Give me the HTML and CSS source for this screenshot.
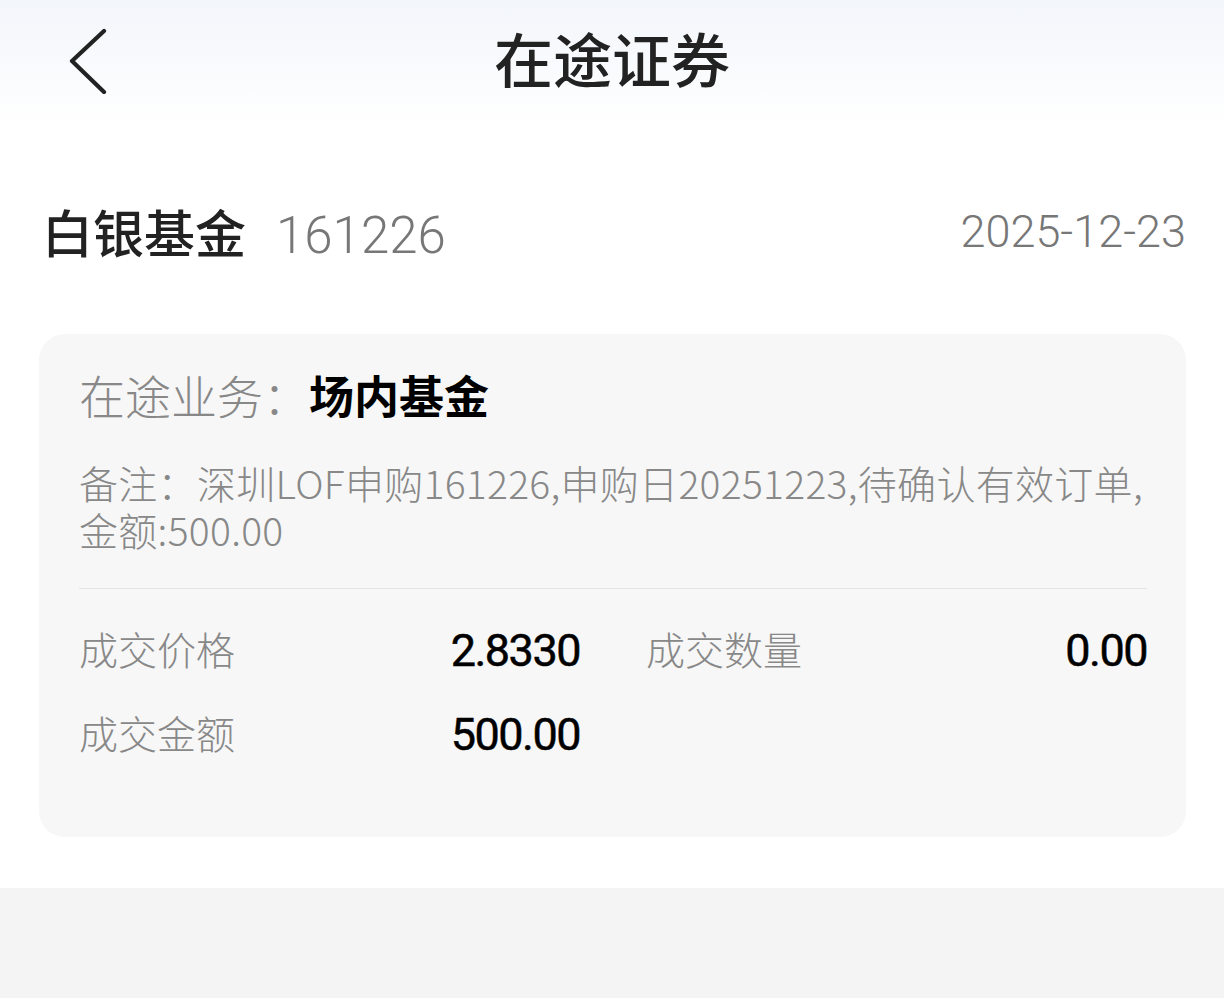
FILE: index.html
```html
<!DOCTYPE html>
<html lang="zh-CN">
<head>
<meta charset="utf-8">
<title>在途证券</title>
<link rel="stylesheet" href="styles.css">
</head>
<body>
<div class="page">
  <header class="header">
    <span class="back">
      <svg width="40" height="66" viewBox="0 0 40 66"><polyline points="36,3 4,33 36,64" fill="none" stroke="#222" stroke-width="4.2" stroke-linecap="round" stroke-linejoin="round"/></svg>
    </span>
    <h1 class="title">在途证券</h1>
  </header>
  <section class="stock">
    <div class="stock-left">
      <span class="stock-name">白银基金</span>
      <span class="stock-code">161226</span>
    </div>
    <span class="stock-date">2025-12-23</span>
  </section>
  <section class="card">
    <div class="biz"><span class="biz-label">在途业务：</span><span class="biz-value">场内基金</span></div>
    <div class="remark">
      <div class="remark-line">备注：深圳LOF申购161226,申购日20251223,待确认有效订单,</div>
      <div class="remark-line">金额:500.00</div>
    </div>
    <div class="divider"></div>
    <div class="grid">
      <div class="cell"><span class="label">成交价格</span><span class="value">2.8330</span></div>
      <div class="cell"><span class="label">成交数量</span><span class="value">0.00</span></div>
      <div class="cell"><span class="label">成交金额</span><span class="value">500.00</span></div>
    </div>
  </section>
  <div class="footer"></div>
</div>
</body>
</html>
```
FILE: styles.css
```css
html, body {
  margin: 0;
  padding: 0;
  height: 100%;
  background: #fff;
}
body {
  font-family: Roboto, "Noto Sans CJK SC", sans-serif;
}
.page {
  display: flex;
  flex-direction: column;
  min-height: 100%;
}
.header {
  position: relative;
  height: 124px;
  display: flex;
  align-items: center;
  justify-content: center;
  background: linear-gradient(180deg, #f3f6fb 0%, #f9fbfd 60%, #ffffff 100%);
}
.back {
  position: absolute;
  left: 68px;
  top: 28px;
  width: 40px;
  height: 66px;
}
.back svg { display: block; }
.title {
  margin: 0;
  font-family: "Noto Sans CJK SC", sans-serif;
  font-size: 59px;
  font-weight: 500;
  color: #222;
  line-height: 1;
  transform: translateY(-5px);
}
.stock {
  margin-top: 57px;
  height: 100px;
  padding: 0 38px 0 42px;
  display: flex;
  align-items: center;
  justify-content: space-between;
}
.stock-left {
  display: flex;
  align-items: baseline;
  gap: 30px;
}
.stock-name {
  font-family: "Noto Sans CJK SC", sans-serif;
  font-size: 51px;
  font-weight: 500;
  color: #222;
}
.stock-code {
  font-family: Roboto, sans-serif;
  font-size: 51px;
  font-weight: 300;
  color: #777;
}
.stock-date {
  font-family: Roboto, sans-serif;
  font-size: 45px;
  font-weight: 300;
  color: #777;
}
.card {
  margin: 53px 38px 0 39px;
  background: #f7f7f7;
  border-radius: 26px;
  padding: 30px 39px 75px 40px;
}
.biz {
  height: 60px;
  display: flex;
  align-items: center;
  font-family: "Noto Sans CJK SC", sans-serif;
  font-size: 46px;
}
.biz-label {
  color: #888;
  font-weight: 300;
}
.biz-value {
  color: #000;
  font-weight: 700;
  font-size: 45px;
}
.remark {
  margin-top: 35px;
  font-family: "Noto Sans CJK SC", sans-serif;
  font-size: 39px;
  font-weight: 300;
  color: #888;
  white-space: nowrap;
  letter-spacing: 0.3px;
}
.remark-line {
  height: 47px;
  line-height: 47px;
}
.divider {
  margin-top: 35px;
  height: 1px;
  background: #e4e4e4;
}
.grid {
  margin-top: 29px;
  display: grid;
  grid-template-columns: 1fr 1fr;
  column-gap: 66px;
  row-gap: 24px;
}
.cell {
  height: 60px;
  display: flex;
  align-items: center;
  justify-content: space-between;
}
.label {
  font-family: "Noto Sans CJK SC", sans-serif;
  font-size: 39px;
  font-weight: 300;
  color: #888;
}
.value {
  font-family: Roboto, sans-serif;
  font-size: 45px;
  font-weight: 400;
  color: #000;
  letter-spacing: -1.5px;
  -webkit-text-stroke: 0.5px #000;
  transform: translateY(2px);
}
.footer {
  margin-top: 51px;
  flex: 1;
  background: #f4f4f4;
}
```
